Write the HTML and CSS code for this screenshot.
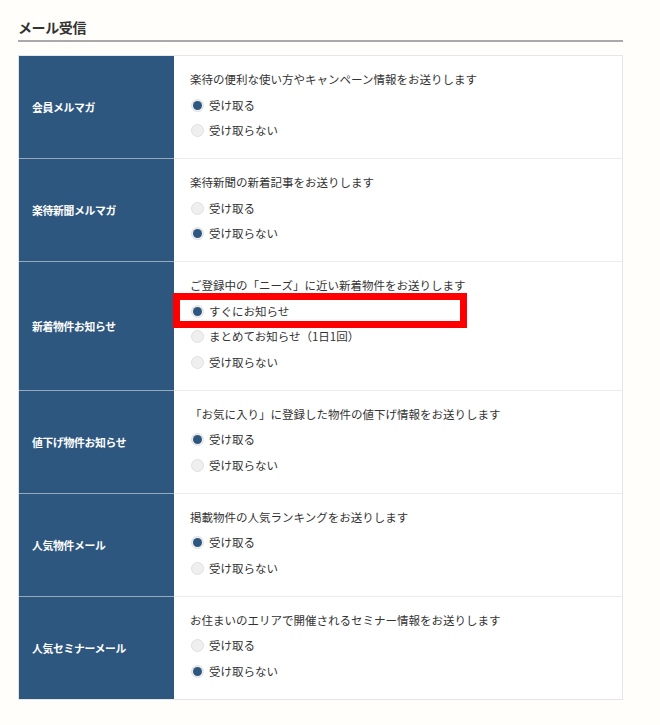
FILE: index.html
```html
<!DOCTYPE html>
<html lang="ja">
<head>
<meta charset="utf-8">
<title>メール受信</title>
<link rel="stylesheet" href="styles.css">
</head>
<body>
<div class="page">
  <h2 class="section-title">メール受信</h2>
  <div class="table">
    <div class="row">
      <div class="head">会員メルマガ</div>
      <div class="body">
        <p class="desc">楽待の便利な使い方やキャンペーン情報をお送りします</p>
        <div class="opt"><span class="radio checked"></span>受け取る</div>
        <div class="opt"><span class="radio"></span>受け取らない</div>
      </div>
    </div>
    <div class="row">
      <div class="head">楽待新聞メルマガ</div>
      <div class="body">
        <p class="desc">楽待新聞の新着記事をお送りします</p>
        <div class="opt"><span class="radio"></span>受け取る</div>
        <div class="opt"><span class="radio checked"></span>受け取らない</div>
      </div>
    </div>
    <div class="row">
      <div class="head">新着物件お知らせ</div>
      <div class="body">
        <p class="desc">ご登録中の「ニーズ」に近い新着物件をお送りします</p>
        <div class="opt marked"><span class="radio checked"></span>すぐにお知らせ<span class="highlight"></span></div>
        <div class="opt"><span class="radio"></span>まとめてお知らせ（1日1回）</div>
        <div class="opt"><span class="radio"></span>受け取らない</div>
      </div>
    </div>
    <div class="row">
      <div class="head">値下げ物件お知らせ</div>
      <div class="body">
        <p class="desc">「お気に入り」に登録した物件の値下げ情報をお送りします</p>
        <div class="opt"><span class="radio checked"></span>受け取る</div>
        <div class="opt"><span class="radio"></span>受け取らない</div>
      </div>
    </div>
    <div class="row">
      <div class="head">人気物件メール</div>
      <div class="body">
        <p class="desc">掲載物件の人気ランキングをお送りします</p>
        <div class="opt"><span class="radio checked"></span>受け取る</div>
        <div class="opt"><span class="radio"></span>受け取らない</div>
      </div>
    </div>
    <div class="row">
      <div class="head">人気セミナーメール</div>
      <div class="body">
        <p class="desc">お住まいのエリアで開催されるセミナー情報をお送りします</p>
        <div class="opt"><span class="radio"></span>受け取る</div>
        <div class="opt"><span class="radio checked"></span>受け取らない</div>
      </div>
    </div>
  </div>
</div>
</body>
</html>
```

FILE: styles.css
```css
html, body {
  margin: 0;
  padding: 0;
}
body {
  background: #fffefa;
  font-family: "Noto Sans CJK JP", "Noto Sans", sans-serif;
  color: #333;
}
.page {
  width: 605px;
  margin-left: 18px;
}
.section-title {
  margin: 0;
  padding-top: 17px;
  padding-bottom: 3px;
  font-size: 14px;
  line-height: 20px;
  font-weight: bold;
  color: #333;
  letter-spacing: -0.4px;
  border-bottom: 2px solid #a9a9a9;
}
.table {
  margin-top: 13px;
  border: 1px solid #e6e6e6;
  border-left: 1px solid #e0e4e8;
  background: #fff;
}
.row {
  display: grid;
  grid-template-columns: 155px 1fr;
}
.head {
  background: #2e5780;
  color: #fff;
  font-weight: bold;
  font-size: 10.8px;
  letter-spacing: -0.3px;
  display: flex;
  align-items: center;
  padding-left: 13px;
}
.body {
  padding: 11px 16px 14.5px;
  font-size: 11.5px;
  color: #333;
}
.row + .row .head {
  border-top: 1px solid #97a9bc;
}
.row + .row .body {
  border-top: 1px solid #ececec;
}
.desc {
  margin: 0;
  line-height: 25.5px;
}
.opt {
  line-height: 25.5px;
  display: flex;
  align-items: center;
}
.marked {
  position: relative;
}
.highlight {
  position: absolute;
  left: -17px;
  top: -6px;
  width: 294px;
  height: 35px;
  border: 7px solid #ff0000;
  box-sizing: border-box;
}
.radio {
  width: 13px;
  height: 13px;
  box-sizing: border-box;
  border-radius: 50%;
  background: #efefef;
  border: 1px solid #e0e0e0;
  margin-left: 1px;
  margin-right: 5px;
  position: relative;
  flex: none;
}
.radio.checked::after {
  content: "";
  position: absolute;
  left: 1px;
  top: 1px;
  width: 9px;
  height: 9px;
  border-radius: 50%;
  background: #2e5780;
}
```
